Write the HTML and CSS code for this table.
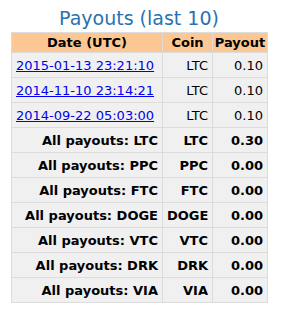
FILE: index.html
```html
<!DOCTYPE html>
<html>
<head>
<meta charset="utf-8">
<link rel="stylesheet" href="styles.css">
</head>
<body>
<div class="panel">
  <h2 class="title">Payouts (last 10)</h2>
  <table class="payouts">
    <colgroup>
      <col class="c-date">
      <col class="c-coin">
      <col class="c-pay">
    </colgroup>
    <thead>
      <tr><th>Date (UTC)</th><th>Coin</th><th>Payout</th></tr>
    </thead>
    <tbody>
      <tr><td class="date"><a href="#">2015-01-13 23:21:10</a></td><td>LTC</td><td>0.10</td></tr>
      <tr><td class="date"><a href="#">2014-11-10 23:14:21</a></td><td>LTC</td><td>0.10</td></tr>
      <tr><td class="date"><a href="#">2014-09-22 05:03:00</a></td><td>LTC</td><td>0.10</td></tr>
      <tr class="total"><td>All payouts: LTC</td><td>LTC</td><td>0.30</td></tr>
      <tr class="total"><td>All payouts: PPC</td><td>PPC</td><td>0.00</td></tr>
      <tr class="total"><td>All payouts: FTC</td><td>FTC</td><td>0.00</td></tr>
      <tr class="total"><td>All payouts: DOGE</td><td>DOGE</td><td>0.00</td></tr>
      <tr class="total"><td>All payouts: VTC</td><td>VTC</td><td>0.00</td></tr>
      <tr class="total"><td>All payouts: DRK</td><td>DRK</td><td>0.00</td></tr>
      <tr class="total"><td>All payouts: VIA</td><td>VIA</td><td>0.00</td></tr>
    </tbody>
  </table>
</div>
</body>
</html>
```
FILE: styles.css
```css
html, body {
  margin: 0;
  padding: 0;
  background: #ffffff;
}
body {
  font-family: "DejaVu Sans", Verdana, sans-serif;
  font-size: 13px;
  color: #000;
}
.panel {
  width: 256px;
  padding: 6px 0 0 11px;
}
.title {
  margin: 0 0 1px;
  font-size: 19px;
  font-weight: normal;
  color: #2a72b0;
  text-align: center;
  line-height: 25px;
}
.payouts {
  width: 256px;
  table-layout: fixed;
  border-collapse: collapse;
  white-space: nowrap;
}
.c-date { width: 151px; }
.c-coin { width: 50px; }
.c-pay { width: 55px; }
.payouts th, .payouts td {
  box-sizing: border-box;
  border: 1px solid #dcdcdc;
  padding: 0 4px;
}
.payouts th {
  background: #fdc794;
  font-weight: bold;
  height: 20px;
  text-align: center;
  padding: 0 1px;
}
.payouts td {
  background: #f0f0f0;
  height: 25px;
  text-align: right;
}
.payouts td.date {
  text-align: left;
}
.payouts a {
  color: #0000ee;
}
.total td {
  font-weight: bold;
}
```
